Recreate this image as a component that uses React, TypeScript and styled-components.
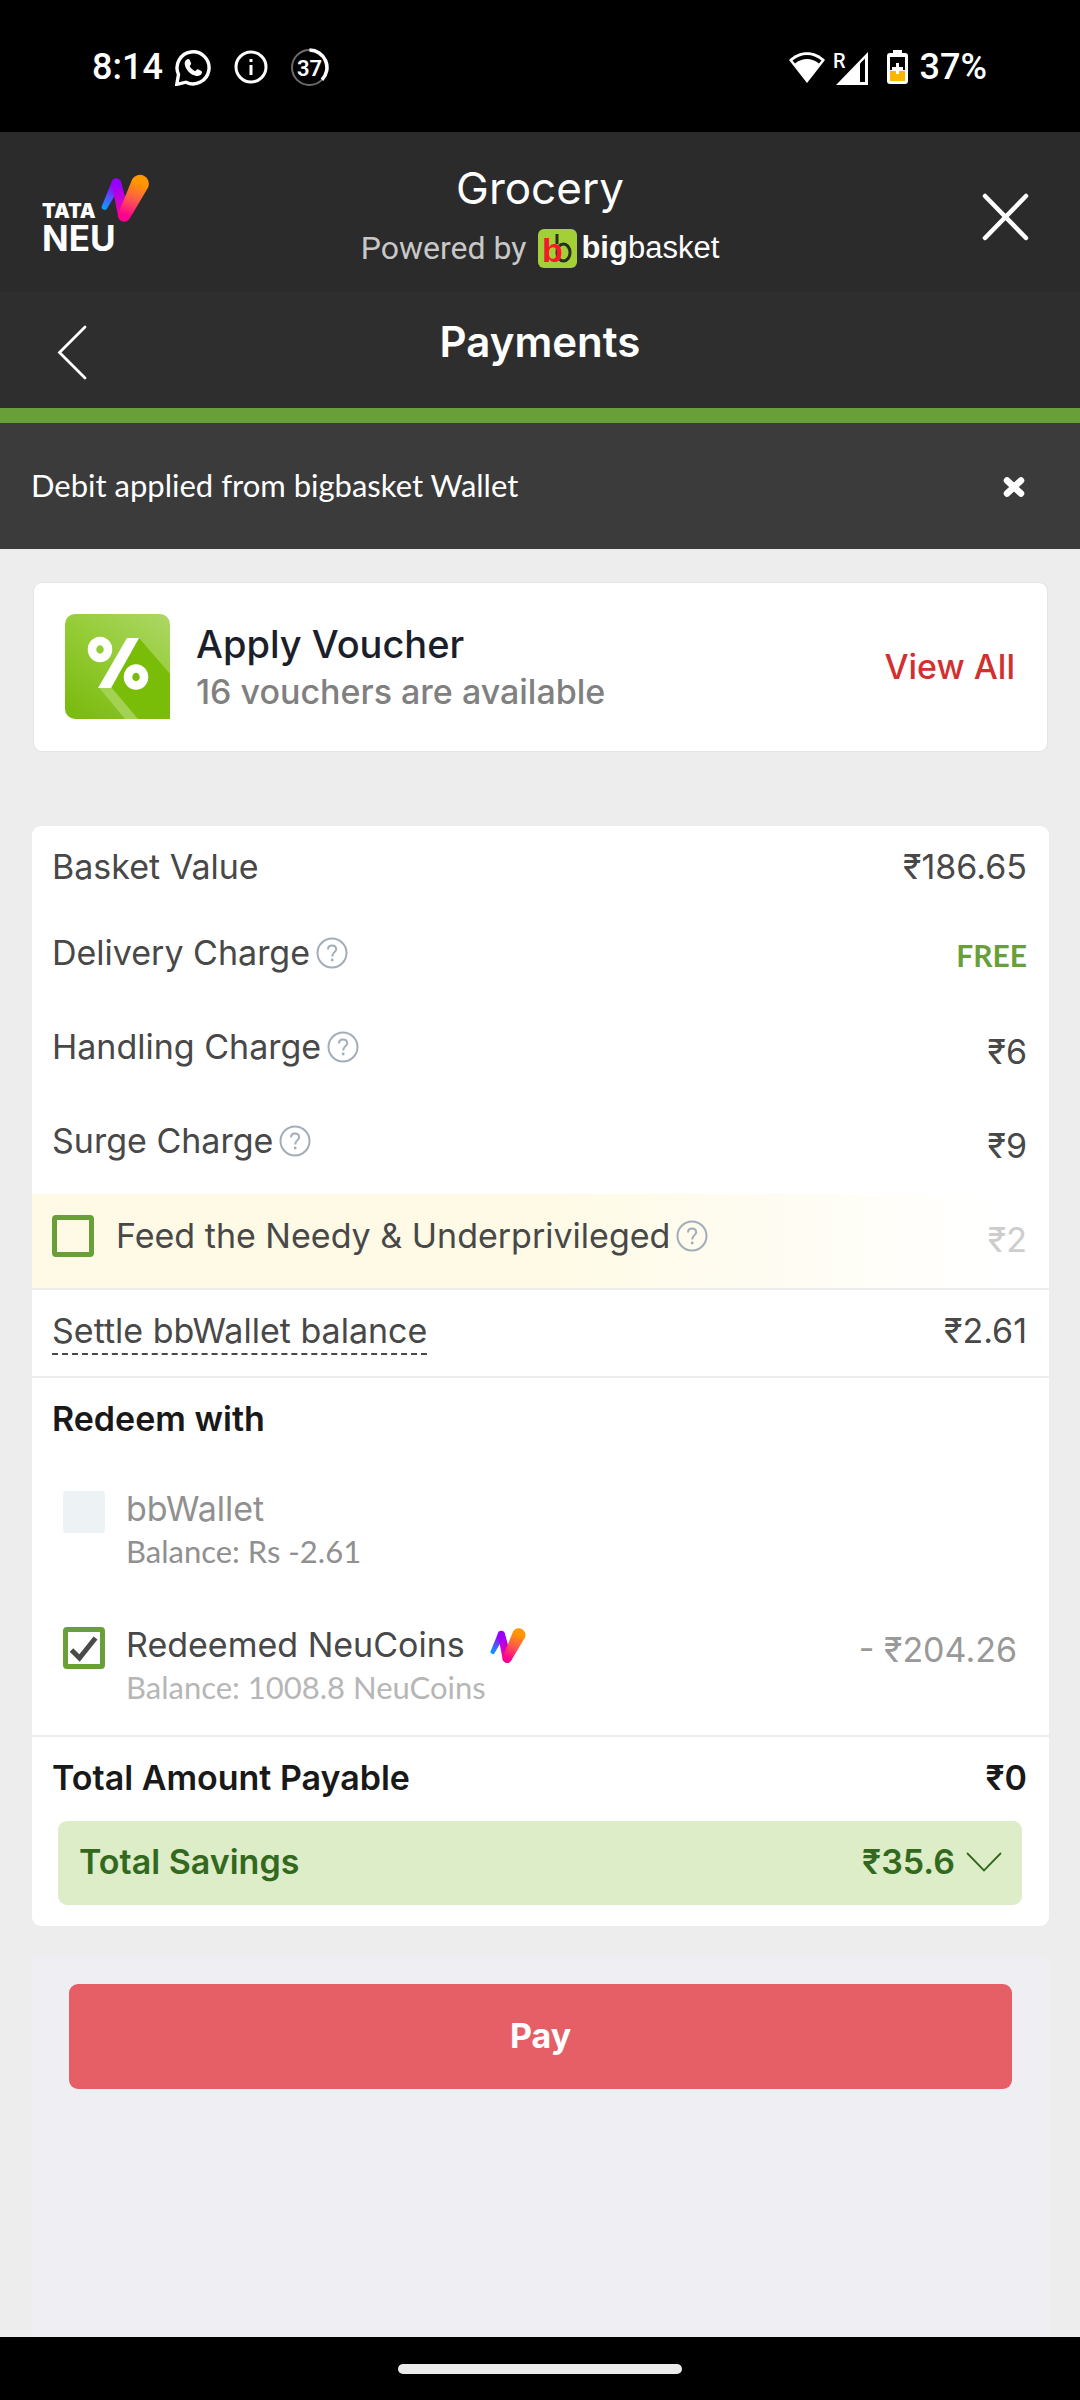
import React, { useId, useState } from 'react';
import styled, { createGlobalStyle } from 'styled-components';

const body = `Inter, "Open Sans", sans-serif`;
const compact = `Lato, "Open Sans", sans-serif`;
const system = `Roboto, "Noto Sans", sans-serif`;
const green = '#689f38';
const line = '#ededed';

const GlobalStyle = createGlobalStyle`
  *, *::before, *::after { box-sizing: border-box; }
  body { margin: 0; background: #ededed; font-family: ${body}; }
  h1, h2, p { margin: 0; font-weight: inherit; }
  button { margin: 0; padding: 0; border: 0; background: none; font: inherit; color: inherit; cursor: pointer; }
  svg { display: block; flex: none; }
`;

const Page = styled.div`
  display: flex;
  flex-direction: column;
  min-height: 100vh;
`;

/* ---------- status bar ---------- */

const StatusBar = styled.div`
  display: flex;
  justify-content: space-between;
  align-items: center;
  height: 132px;
  padding: 2px 93px 0 92px;
  background: #000;
  color: #fff;
  font: 500 36px/44px ${system};
`;

const StatusGroup = styled.div<{ $gap: number }>`
  display: flex;
  align-items: center;
  gap: ${(p) => p.$gap}px;
`;

/* ---------- headers ---------- */

const BrandBar = styled.header`
  display: grid;
  grid-template-columns: 1fr auto 1fr;
  align-items: center;
  height: 160px;
  padding: 0 42px;
  background: #2b2b2b;
  color: #fff;
`;

const BrandCenter = styled.div`
  display: flex;
  flex-direction: column;
  align-items: center;
  gap: 14px;
  padding-top: 6px;
`;

const BrandTitle = styled.h2`
  font-size: 44px;
  line-height: 52px;
`;

const Powered = styled.p`
  display: flex;
  align-items: center;
  gap: 12px;
  height: 40px;
  color: #c8c8c8;
  font: 400 32px/40px ${system};
`;

const Wordmark = styled.span`
  display: flex;
  align-items: center;
  gap: 4px;
  color: #fff;
  font: 400 31px/40px "Liberation Sans", Arial, sans-serif;
`;

const IconButton = styled.button`
  justify-self: start;
`;

const CloseButton = styled.button`
  justify-self: end;
  padding: 10px 9px 0;
`;

const TitleBar = styled.div`
  display: grid;
  grid-template-columns: 1fr auto 1fr;
  align-items: center;
  height: 131px;
  padding: 4px 57px 0;
  background: #2f2e2e;
  border-bottom: 15px solid ${green};
  color: #fff;
`;

const Title = styled.h1`
  padding-bottom: 20px;
  font-size: 42px;
  font-weight: 600;
  line-height: 52px;
`;

const Notice = styled.div`
  display: flex;
  justify-content: space-between;
  align-items: center;
  height: 126px;
  padding: 0 55px 3px 31px;
  background: #3b3b3b;
  color: #fff;
  font: 400 31px/40px ${compact};
`;

/* ---------- content ---------- */

const Main = styled.main`
  display: flex;
  flex: 1;
  flex-direction: column;
  padding: 34px 31px 0 32px;
`;

const VoucherCard = styled.section`
  display: flex;
  align-items: center;
  gap: 26px;
  height: 168px;
  margin: 0 2px 75px;
  padding: 0 32px 2px 31px;
  border-radius: 8px;
  background: #fff;
  box-shadow: 0 0 2px rgba(0, 0, 0, 0.12);
`;

const VoucherText = styled.div`
  flex: 1;
  padding-top: 3px;
  line-height: 48px;
  font-weight: 500;
`;

const VoucherTitle = styled.h2`
  color: #1b1f2b;
  font-size: 38px;
`;

const VoucherHint = styled.p`
  color: #808080;
  font-size: 34px;
`;

const ViewAll = styled.a`
  color: #d32f2f;
  font-size: 34px;
  font-weight: 500;
  text-decoration: none;
`;

const Summary = styled.section`
  border-radius: 9px;
  background: #fff;
  overflow: hidden;
  padding-bottom: 21px;
  color: #484848;
  font-size: 34px;
  line-height: 40px;
`;

const Row = styled.div<{ $kind?: 'fee' | 'donation' | 'total' }>`
  display: flex;
  justify-content: space-between;
  align-items: flex-start;
  min-height: ${(p) => (p.$kind === 'total' ? 84 : p.$kind ? 94 : 86)}px;
  padding: 21px 22px 0 20px;
  ${(p) => p.$kind === 'donation' && 'background: linear-gradient(90deg, #fefae5 50%, #fff 95%);'}
  ${(p) => p.$kind === 'total' && 'color: #191919; font-weight: 600;'}
`;

const Divider = styled.hr`
  height: 2px;
  margin: 0;
  border: 0;
  background: ${line};
`;

const Label = styled.span`
  display: flex;
  align-items: center;
  gap: 6px;
`;

const Amount = styled.span<{ $low?: boolean; $muted?: boolean }>`
  line-height: ${(p) => (p.$low ? 50 : 40)}px;
  ${(p) => p.$muted && 'color: #cdcdcd;'}
`;

const Free = styled.span`
  color: ${green};
  font: 700 30px/44px ${compact};
`;

const SettleButton = styled.button`
  padding-bottom: 2px;
  border-bottom: 2px dashed #484848;
`;

const CheckLabel = styled.label`
  display: flex;
  align-items: center;
  gap: 22px;
`;

const CheckCell = styled.span`
  display: grid;
  flex: none;
  width: 42px;
  height: 42px;

  & > * {
    grid-area: 1 / 1;
    pointer-events: none;
  }
`;

const CheckInput = styled.input`
  && {
    pointer-events: auto;
  }
  appearance: none;
  width: 42px;
  height: 42px;
  margin: 0;
  border: 5px solid ${green};
  border-radius: 4px;

  &:disabled {
    border-color: #edf2f5;
    background: #edf2f5;
  }
`;

const RedeemTitle = styled.h2`
  padding: 21px 20px 0;
  color: #191919;
  font-size: 34px;
  font-weight: 600;
`;

const RedeemList = styled.div`
  display: flex;
  flex-direction: column;
  gap: 52px;
  padding: 49px 32px 27px 31px;
`;

const RedeemRow = styled.div`
  display: flex;
  justify-content: space-between;
  align-items: flex-start;
`;

const RedeemOption = styled.label`
  display: flex;
  align-items: flex-start;
  gap: 21px;
  line-height: 42px;

  & > ${CheckCell} {
    margin-top: 3px;
  }
`;

const RedeemName = styled.span<{ $disabled?: boolean }>`
  display: flex;
  align-items: center;
  gap: 25px;
  ${(p) => p.$disabled && 'color: #909090;'}
`;

const Balance = styled.span<{ $light?: boolean }>`
  display: block;
  color: ${(p) => (p.$light ? '#b6b6b6' : '#909090')};
  font: 400 31px/42px ${compact};
`;

const Redeemed = styled.span`
  color: #999;
  line-height: 52px;
`;

const SavingsButton = styled.button`
  display: flex;
  justify-content: space-between;
  align-items: center;
  width: calc(100% - 53px);
  height: 84px;
  margin: 0 27px 0 26px;
  padding: 0 20px 2px 21px;
  border-radius: 9px;
  background: #dcedc8;
  color: #33691e;
  font-weight: 600;
`;

const SavingsValue = styled.span`
  display: flex;
  align-items: center;
  gap: 11px;
`;

const PayPanel = styled.section`
  flex: 1;
  margin-top: 31px;
  padding: 27px 37px;
  background: #eeeef3;
`;

const PayButton = styled.button`
  width: 100%;
  height: 105px;
  padding-bottom: 3px;
  border-radius: 9px;
  background: #e65f67;
  color: #fff;
  font-size: 34px;
  font-weight: 700;
`;

const NavBar = styled.footer`
  display: flex;
  justify-content: center;
  align-items: center;
  height: 63px;
  background: #000;
`;

const NavHandle = styled.span`
  width: 284px;
  height: 10px;
  border-radius: 5px;
  background: #ececec;
`;

/* ---------- drawings ---------- */

/* Outline of a round-ended stroke that runs from radius r1 to radius r2. */
function taper(x1: number, y1: number, r1: number, x2: number, y2: number, r2: number) {
  const d = Math.hypot(x2 - x1, y2 - y1);
  const base = Math.atan2(y2 - y1, x2 - x1);
  const a = Math.acos((r1 - r2) / d);
  const p = (x: number, y: number, r: number, t: number) => `${x + r * Math.cos(t)} ${y + r * Math.sin(t)}`;
  return `M${p(x1, y1, r1, base + a)}A${r1} ${r1} 0 0 1 ${p(x1, y1, r1, base - a)}L${p(x2, y2, r2, base - a)}A${r2} ${r2} 0 0 1 ${p(x2, y2, r2, base + a)}Z`;
}

function NeuMark() {
  const id = useId();
  return (
    <g>
      <defs>
        <linearGradient id={`${id}a`} gradientUnits="userSpaceOnUse" x1="62" y1="37" x2="74" y2="8">
          <stop offset="0" stopColor="#0a9dff" />
          <stop offset="0.45" stopColor="#5a4bff" />
          <stop offset="0.8" stopColor="#9500ff" />
        </linearGradient>
        <linearGradient id={`${id}b`} gradientUnits="userSpaceOnUse" x1="74" y1="8" x2="82" y2="48">
          <stop offset="0.1" stopColor="#9500ff" />
          <stop offset="0.6" stopColor="#d800c0" />
          <stop offset="1" stopColor="#ff0090" />
        </linearGradient>
        <linearGradient id={`${id}c`} gradientUnits="userSpaceOnUse" x1="82" y1="48" x2="98" y2="6">
          <stop offset="0.1" stopColor="#ff0090" />
          <stop offset="0.5" stopColor="#ff5a4a" />
          <stop offset="0.9" stopColor="#ff9800" />
        </linearGradient>
      </defs>
      <path d={taper(62.7, 34.8, 3, 74.4, 11, 4.8)} fill={`url(#${id}a)`} />
      <path d={taper(74.4, 11, 4.8, 82, 43.4, 6)} fill={`url(#${id}b)`} />
      <path d={taper(82.3, 43.4, 6.3, 98.5, 10.7, 9)} fill={`url(#${id}c)`} />
    </g>
  );
}

const TataNeuLogo = () => (
  <svg width="112" height="80" viewBox="0 0 112 80" fill="#fff" role="img" aria-label="Tata Neu">
    <text x="0" y="46" fontFamily="Inter, sans-serif" fontWeight="900" fontSize="20">TATA</text>
    <text x="0" y="79" fontFamily="Inter, sans-serif" fontWeight="700" fontSize="35">NEU</text>
    <NeuMark />
  </svg>
);

const NeuCoinIcon = () => (
  <svg width="37" height="38" viewBox="59 0 50 51" aria-hidden="true">
    <NeuMark />
  </svg>
);

const BigbasketIcon = () => (
  <svg width="39" height="39" viewBox="0 0 39 39" aria-hidden="true">
    <rect width="39" height="39" rx="6" fill="#a5cf37" />
    <path d="M19 5V15" fill="none" stroke="#26301c" strokeWidth="3" />
    <ellipse cx="25.5" cy="23.5" rx="6.5" ry="8.500" fill="none" stroke="#26301c" strokeWidth="3" />
    <text x="4" y="33" fontFamily="Liberation Sans, Arial, sans-serif" fontSize="34" fontWeight="700" fill="#f5192b">b</text>
  </svg>
);

const WhatsAppIcon = () => (
  <svg width="37" height="37" viewBox="0 0 37 37" fill="none" aria-hidden="true">
    <path d="M3.5 25.5A16 16 0 1 1 11 33.2L1.8 35.3Z" stroke="#fff" strokeWidth="3.4" />
    <path d="M12.4 10.2c-1.8.6-3 2.6-2.7 4.7 1 6 5.6 10.7 11.5 12 2.4.5 4.8-.6 5.6-2.6.5-1.3.2-1.9-.8-2.5l-2.7-1.3c-.8-.4-1.3-.3-1.900.4l-1.2 1.4c-2.5-1-4.4-2.9-5.5-5.2l1.2-1.6c.4-.6.4-1 .1-1.6l-1.3-3c-.5-1-1.3-1.1-2.300-.7Z" fill="#fff" />
  </svg>
);

const InfoIcon = () => (
  <svg width="34" height="34" viewBox="0 0 34 34" aria-hidden="true">
    <circle cx="17" cy="17" r="15" fill="none" stroke="#fff" strokeWidth="3" />
    <rect x="15.5" y="15" width="3" height="10" fill="#fff" />
    <rect x="15.5" y="9" width="3" height="3" fill="#fff" />
  </svg>
);

const ChargeRing = () => (
  <svg width="39" height="39" viewBox="0 0 39 39" aria-hidden="true">
    <circle cx="19.5" cy="19.5" r="17.5" fill="none" stroke="#6a6a6a" strokeWidth="2" />
    <path d="M19.5 2A17.5 17.5 0 0 1 32 31.7" fill="none" stroke="#fff" strokeWidth="3.6" />
    <text x="19.5" y="27.5" textAnchor="middle" fill="#fff" fontFamily="Roboto, sans-serif" fontWeight="600" fontSize="22">37</text>
  </svg>
);

const WifiIcon = () => (
  <svg width="40" height="34" viewBox="0 0 40 34" fill="none" aria-hidden="true">
    <path d="M20 33 2 10C12-.5 28-.5 38 10Z" fill="#fff" />
    <path d="M5.5 10.5C14 3 26 3 34.5 10.5L32 13.5C25 7.5 15 7.5 8 13.5Z" fill="#000" />
  </svg>
);

const SignalIcon = () => (
  <svg width="36" height="38" viewBox="0 -2 36 38" aria-hidden="true">
    <text x="0" y="18" fill="#fff" fontFamily="Roboto, sans-serif" fontSize="20">R</text>
    <path d="M3 35 35 2V35Z" fill="#fff" />
    <path d="M27 13.5 32 8.5V32H27Z" fill="#000" />
  </svg>
);

const BatteryIcon = () => (
  <svg width="21" height="34" viewBox="0 0 21 34" aria-hidden="true">
    <path d="M6 0h9v3h3a3 3 0 0 1 3 3v25a3 3 0 0 1-3 3H3a3 3 0 0 1-3-3V6a3 3 0 0 1 3-3h3Z" fill="#fff" />
    <rect x="3" y="7" width="15" height="13" fill="#000" />
    <rect x="3" y="21" width="15" height="10" fill="#fbb700" />
    <path d="M9 13h3v4h4v3h-4v4H9v-4H5v-3h4Z" fill="#fff" />
  </svg>
);

const CloseIcon = () => (
  <svg width="47" height="48" viewBox="0 0 47 48" aria-hidden="true">
    <path d="M3 3 44 45M44 3 3 45" stroke="#fff" strokeWidth="4.5" strokeLinecap="round" />
  </svg>
);

const BackIcon = () => (
  <svg width="30" height="56" viewBox="0 0 30 56" fill="none" aria-hidden="true">
    <path d="M28 3 2.5 28.5 28 54" stroke="#fff" strokeWidth="2.8" strokeLinecap="round" />
  </svg>
);

const DismissIcon = () => (
  <svg width="22" height="24" viewBox="0 -4 22 24" aria-hidden="true">
    <path d="M4 3.5 18 16.5M18 3.5 4 16.5" stroke="#fff" strokeWidth="6.5" strokeLinecap="round" />
  </svg>
);

const VoucherIcon = () => (
  <svg width="105" height="105" viewBox="0 0 105 105" aria-hidden="true">
    <defs>
      <linearGradient id="voucherGreen" x1="0.9" y1="0" x2="0.2" y2="1">
        <stop offset="0" stopColor="#abd663" />
        <stop offset="0.5" stopColor="#93cb33" />
        <stop offset="1" stopColor="#7cbb12" />
      </linearGradient>
    </defs>
    <path d="M10 0H95a10 10 0 0 1 10 10V105H10A10 10 0 0 1 0 95V10A10 10 0 0 1 10 0Z" fill="url(#voucherGreen)" />
    <path d="M74 24 105 60V105H72L46 73Z" fill="#79bd08" />
    <path d="M33.5 73H46L73 105H60Z" fill="#a3d252" />
    <path d="M62 24H74L46 74H33Z" fill="#fff" />
    <ellipse cx="35" cy="35.5" rx="8" ry="8.5" fill="none" stroke="#fff" strokeWidth="8.5" />
    <ellipse cx="71" cy="63" rx="8" ry="8.5" fill="none" stroke="#fff" strokeWidth="8.5" />
  </svg>
);

const HelpIcon = () => (
  <svg width="32" height="32" viewBox="0 0 32 32" fill="none" stroke="#a3adb9" strokeWidth="2" aria-hidden="true">
    <circle cx="16" cy="16" r="14.5" />
    <path d="M12 12.5C12 10 13.6 8.5 16 8.5S20.2 10 20.2 12.2C20.2 15 16.2 15.5 16.2 19.5" />
    <circle cx="16.2" cy="23" r="1.4" fill="#a3adb9" stroke="none" />
  </svg>
);

const CheckIcon = () => (
  <svg width="42" height="42" viewBox="0 0 42 42" fill="none" aria-hidden="true">
    <path d="M8.5 23 16.5 31 32.5 11" stroke="#4a4a4a" strokeWidth="5" />
  </svg>
);

const ChevronDown = () => (
  <svg width="36" height="20" viewBox="0 0 36 20" fill="none" aria-hidden="true">
    <path d="M1 1 18 18.5 35 1" stroke="#33691e" strokeWidth="1.8" />
  </svg>
);

/* ---------- parts ---------- */

function Check({ id, checked, disabled, onChange }: { id: string; checked: boolean; disabled?: boolean; onChange?: () => void }) {
  return (
    <CheckCell>
      <CheckInput type="checkbox" id={id} checked={checked} disabled={disabled} onChange={() => onChange?.()} />
      {checked && <CheckIcon />}
    </CheckCell>
  );
}

function Help({ topic }: { topic: string }) {
  return (
    <button type="button" aria-label={`About ${topic}`}>
      <HelpIcon />
    </button>
  );
}

const fees = [
  { name: 'Delivery Charge', amount: null },
  { name: 'Handling Charge', amount: '₹6' },
  { name: 'Surge Charge', amount: '₹9' },
];

export default function App() {
  const [donate, setDonate] = useState(false);
  const [redeem, setRedeem] = useState(true);

  return (
    <Page>
      <GlobalStyle />
      <StatusBar>
        <StatusGroup $gap={22}>
          <StatusGroup $gap={12}>
            <span>8:14</span>
            <WhatsAppIcon />
          </StatusGroup>
          <InfoIcon />
          <ChargeRing />
        </StatusGroup>
        <StatusGroup $gap={12}>
          <StatusGroup $gap={18}>
            <StatusGroup $gap={6}>
              <WifiIcon />
              <SignalIcon />
            </StatusGroup>
            <BatteryIcon />
          </StatusGroup>
          <span>37%</span>
        </StatusGroup>
      </StatusBar>

      <BrandBar>
        <TataNeuLogo />
        <BrandCenter>
          <BrandTitle>Grocery</BrandTitle>
          <Powered>
            Powered by
            <Wordmark>
              <BigbasketIcon />
              <span><b>big</b>basket</span>
            </Wordmark>
          </Powered>
        </BrandCenter>
        <CloseButton type="button" aria-label="Close">
          <CloseIcon />
        </CloseButton>
      </BrandBar>

      <TitleBar>
        <IconButton type="button" aria-label="Back">
          <BackIcon />
        </IconButton>
        <Title>Payments</Title>
      </TitleBar>

      <Notice role="status">
        <span>Debit applied from bigbasket Wallet</span>
        <IconButton type="button" aria-label="Dismiss">
          <DismissIcon />
        </IconButton>
      </Notice>

      <Main>
        <VoucherCard>
          <VoucherIcon />
          <VoucherText>
            <VoucherTitle>Apply Voucher</VoucherTitle>
            <VoucherHint>16 vouchers are available</VoucherHint>
          </VoucherText>
          <ViewAll href="#vouchers">View All</ViewAll>
        </VoucherCard>

        <Summary>
          <Row>
            <Label>Basket Value</Label>
            <Amount>₹186.65</Amount>
          </Row>
          {fees.map((fee) => (
            <Row key={fee.name} $kind="fee">
              <Label>
                {fee.name}
                <Help topic={fee.name} />
              </Label>
              {fee.amount ? <Amount $low>{fee.amount}</Amount> : <Free>FREE</Free>}
            </Row>
          ))}
          <Row $kind="donation">
            <Label>
              <CheckLabel htmlFor="donate">
                <Check id="donate" checked={donate} onChange={() => setDonate(!donate)} />
                Feed the Needy &amp; Underprivileged
              </CheckLabel>
              <Help topic="the donation" />
            </Label>
            <Amount $low $muted>₹2</Amount>
          </Row>
          <Divider />
          <Row>
            <SettleButton type="button">Settle bbWallet balance</SettleButton>
            <Amount>₹2.61</Amount>
          </Row>
          <Divider />
          <RedeemTitle>Redeem with</RedeemTitle>
          <RedeemList>
            <RedeemRow>
              <RedeemOption htmlFor="wallet">
                <Check id="wallet" checked={false} disabled />
                <span>
                  <RedeemName $disabled>bbWallet</RedeemName>
                  <Balance>Balance: Rs -2.61</Balance>
                </span>
              </RedeemOption>
            </RedeemRow>
            <RedeemRow>
              <RedeemOption htmlFor="neucoins">
                <Check id="neucoins" checked={redeem} onChange={() => setRedeem(!redeem)} />
                <span>
                  <RedeemName>
                    Redeemed NeuCoins
                    <NeuCoinIcon />
                  </RedeemName>
                  <Balance $light>Balance: 1008.8 NeuCoins</Balance>
                </span>
              </RedeemOption>
              <Redeemed>- ₹204.26</Redeemed>
            </RedeemRow>
          </RedeemList>
          <Divider />
          <Row $kind="total">
            <span>Total Amount Payable</span>
            <span>₹0</span>
          </Row>
          <SavingsButton type="button" aria-expanded="false">
            <span>Total Savings</span>
            <SavingsValue>
              ₹35.6
              <ChevronDown />
            </SavingsValue>
          </SavingsButton>
        </Summary>

        <PayPanel>
          <PayButton type="button">Pay</PayButton>
        </PayPanel>
      </Main>

      <NavBar>
        <NavHandle />
      </NavBar>
    </Page>
  );
}
